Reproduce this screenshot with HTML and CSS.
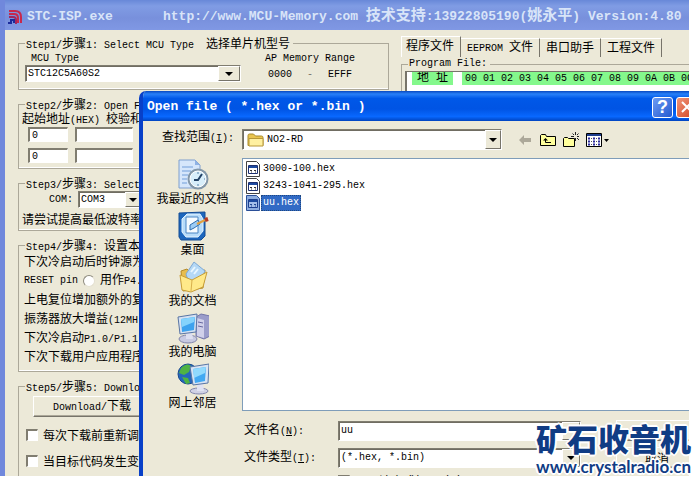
FILE: index.html
```html
<!DOCTYPE html>
<html lang="zh-CN">
<head>
    <meta charset="UTF-8">
    <title>STC-ISP.exe</title>
    <link rel="stylesheet" href="styles.css">
</head>
<body>
    <div class="desktop">
        <!-- Main window -->
        <main class="window">
            <header class="title-bar">
                <svg class="app-icon" width="16" height="16" viewBox="0 0 16 16" fill="none">
                    <path d="M2 2h6q6 0 6 6v6M2 5h5q4 0 4 4v5" stroke="#c8284c" stroke-width="2"/>
                    <path d="M2 8h4q3 0 3 3v4" stroke="#a02860" stroke-width="2"/>
                    <path d="M1 14h3v-3h3v3" stroke="#1c2c9c" stroke-width="2"/>
                </svg>
                <span class="app-name">STC-ISP.exe</span>
                <span class="app-info">http://www.MCU-Memory.com <span class="zh">技术支持</span>:13922805190(<span class="zh">姚永平</span>) Version:4.80</span>
            </header>

            <div class="window-body">
                <div class="steps">
                    <fieldset class="group">
                        <legend><span class="en">Step1/</span>步骤<span class="en">1: Select MCU Type&nbsp; </span>选择单片机型号</legend>
                        <div class="mcu-row">
                            <div class="mcu-type">
                                <label class="en mcu-label" for="mcu">MCU Type</label>
                                <div class="combo">
                                    <select id="mcu"><option>STC12C5A60S2</option></select>
                                    <span class="combo-arrow"></span>
                                </div>
                            </div>
                            <div class="memory-range en">
                                <span>AP Memory Range</span>
                                <span class="range-values"><span>0000</span><span class="dash">-</span><span>EFFF</span></span>
                            </div>
                        </div>
                    </fieldset>

                    <fieldset class="group">
                        <legend><span class="en">Step2/</span>步骤<span class="en">2: Open F</span></legend>
                        <div class="line tight">起始地址<span class="en">(HEX) </span>校验和</div>
                        <div class="address-row">
                            <input class="box short" type="text" value="0" aria-label="起始地址 1">
                            <input class="box" type="text" aria-label="校验和 1">
                            <input class="box" type="text" aria-label="文件 1">
                        </div>
                        <div class="address-row">
                            <input class="box short" type="text" value="0" aria-label="起始地址 2">
                            <input class="box" type="text" aria-label="校验和 2">
                            <input class="box" type="text" aria-label="文件 2">
                        </div>
                    </fieldset>

                    <fieldset class="group">
                        <legend><span class="en">Step3/</span>步骤<span class="en">3: Select</span></legend>
                        <div class="com-row">
                            <label class="en" for="com">COM:</label>
                            <div class="combo com-combo">
                                <select id="com"><option>COM3</option></select>
                                <span class="combo-arrow"></span>
                            </div>
                        </div>
                        <div class="line tight">请尝试提高最低波特率</div>
                    </fieldset>

                    <fieldset class="group options">
                        <legend><span class="en">Step4/</span>步骤<span class="en">4: </span>设置本</legend>
                        <div class="line">下次冷启动后时钟源为</div>
                        <div class="line reset-row">
                            <span class="en">RESET pin</span>
                            <input class="radio" type="radio" name="reset" id="reset-io">
                            <label for="reset-io">用作<span class="en">P4.</span></label>
                        </div>
                        <div class="line">上电复位增加额外的复</div>
                        <div class="line">振荡器放大增益<span class="en">(12MH</span></div>
                        <div class="line">下次冷启动<span class="en">P1.0/P1.1</span></div>
                        <div class="line">下次下载用户应用程序</div>
                    </fieldset>

                    <fieldset class="group download">
                        <legend><span class="en">Step5/</span>步骤<span class="en">5: Downlo</span></legend>
                        <button class="raised download-button" type="button"><span class="en">Download/</span>下载</button>
                        <label class="check-label"><input class="check" type="checkbox">每次下载前重新调</label>
                        <label class="check-label"><input class="check" type="checkbox">当目标代码发生变</label>
                    </fieldset>
                </div>

                <div class="files">
                    <div class="tabs">
                        <button class="tab active" type="button">程序文件</button>
                        <button class="tab" type="button"><span class="en">EEPROM </span>文件</button>
                        <button class="tab" type="button">串口助手</button>
                        <button class="tab" type="button">工程文件</button>
                    </div>
                    <fieldset class="group program">
                        <legend class="en">Program File:</legend>
                        <div class="hex-view">
                            <table class="hex-table">
                                <thead>
                                    <tr>
                                        <th class="address">地 址</th>
                                        <td class="spacer"></td>
                                        <th>00</th><th>01</th><th>02</th><th>03</th><th>04</th><th>05</th>
                                        <th>06</th><th>07</th><th>08</th><th>09</th><th>0A</th><th>0B</th>
                                        <th>0C</th>
                                    </tr>
                                </thead>
                            </table>
                        </div>
                    </fieldset>
                </div>
            </div>
        </main>

        <!-- Open file dialog -->
        <section class="dialog">
            <header class="dialog-title">
                <span class="dialog-name">Open file ( *.hex or *.bin )</span>
                <button class="caption-button" type="button">?</button>
                <button class="caption-button close" type="button" aria-label="关闭">
                    <svg width="14" height="14" viewBox="0 0 14 14"><path d="M2 2l10 10M12 2L2 12" stroke="#fff" stroke-width="2"/></svg>
                </button>
            </header>

            <div class="dialog-body">
                <div class="look-in">
                    <label for="folder">查找范围<span class="en">(<u>I</u>):</span></label>
                    <div class="combo folder-combo">
                        <svg width="18" height="16" viewBox="0 0 18 16">
                            <path d="M1 3.500q0-1.500 1.500-1.500h4l2 2h6q1.500 0 1.500 1.500v8H1z" fill="#e9c44f" stroke="#a98a2c"/>
                            <path d="M2 6.500h14v7.500H2z" fill="#fff0a0" stroke="#b89838"/>
                        </svg>
                        <select id="folder"><option>NO2-RD</option></select>
                        <span class="combo-arrow"></span>
                    </div>
                    <div class="toolbar">
                        <button class="tool" type="button" aria-label="后退">
                            <svg width="16" height="16" viewBox="0 0 16 16"><path d="M2 8l5-5v3h7v4H7v3z" fill="#aca899"/></svg>
                        </button>
                        <button class="tool" type="button" aria-label="向上">
                            <svg width="16" height="16" viewBox="0 0 16 16">
                                <path d="M.5 13.500v-10l1-1h4l1 2h9v9z" fill="#ffff9c" stroke="#000"/>
                                <path d="M5.500 7v3.500H11" fill="none" stroke="#000"/>
                                <path d="M3 8.500L5.500 6 8 8.500z" fill="#000"/>
                            </svg>
                        </button>
                        <button class="tool" type="button" aria-label="新建文件夹">
                            <svg width="16" height="16" viewBox="0 0 16 16">
                                <path d="M.5 14.500v-8l1-1h3l1 1h6v8z" fill="#ffff9c" stroke="#000"/>
                                <path d="M12.500 0v3M12.500 6v3M8 4.500h3M14 4.500h2M9.500 1.500l1.500 1.500M15.500 1.500L14 3M14 6l2 2" stroke="#222"/>
                            </svg>
                        </button>
                        <button class="tool" type="button" aria-label="查看">
                            <svg width="24" height="16" viewBox="0 0 24 16">
                                <path d="M.5 1.500h15v13H.5z" fill="#fff" stroke="#000"/>
                                <path d="M1 2h14v2H1z" fill="#1c3c8c"/>
                                <path d="M2 6.500h2M7 6.500h2M12 6.500h2M2 9.500h2M7 9.500h2M12 9.500h2M2 12.500h2M7 12.500h2M12 12.500h2" stroke="#2a2a9a" stroke-width="2"/>
                                <path d="M5 6.500h1M10 6.500h1M5 9.500h1M10 9.500h1M5 12.500h1M10 12.500h1" stroke="#555"/>
                                <path d="M18 7h5l-2.500 3z" fill="#000"/>
                            </svg>
                        </button>
                    </div>
                </div>

                <div class="browser">
                    <nav class="places">
                        <a class="place" href="#">
                            <svg width="32" height="32" viewBox="0 0 32 32">
                                <path d="M2 1h16l5 5v23H2z" fill="#d5e6fb" stroke="#7f9fcf"/>
                                <path d="M18 1v5h5z" fill="#8fb2e4"/>
                                <path d="M5 8h11M5 12h9M5 16h6M5 20h5M5 24h5" stroke="#a3c2ea" stroke-width="2"/>
                                <circle cx="21" cy="20" r="10.500" fill="#8397a8"/>
                                <circle cx="21" cy="20" r="8" fill="#d8eefa" stroke="#fff"/>
                                <path d="M25 15l-4 6h-4" fill="none" stroke="#244468" stroke-width="2"/>
                                <path d="M21 13v2M21 25v2M27 20h1" stroke="#5680a8"/>
                            </svg>
                            <span>我最近的文档</span>
                        </a>
                        <a class="place" href="#">
                            <svg width="32" height="32" viewBox="0 0 32 32">
                                <path d="M2 3l26-1v24l-4 4H4l-2-3z" fill="#1c66bd" stroke="#154d94"/>
                                <path d="M5 9l5-5h13l3 5v12l-5 6H9l-4-5z" fill="#b7dcfa" stroke="#e5f5ff"/>
                                <path d="M9 7h12v16H9z" fill="#f5fbff" stroke="#4b86c4"/>
                                <path d="M13 20v-5l8-5 2 4-6 4z" fill="#9cccf4" stroke="#2c6db0"/>
                                <path d="M20 14l8-4" stroke="#e0a040" stroke-width="2"/>
                                <path d="M28 10l3-1" stroke="#b83a22" stroke-width="4"/>
                            </svg>
                            <span>桌面</span>
                        </a>
                        <a class="place" href="#">
                            <svg width="32" height="32" viewBox="0 0 32 32">
                                <path d="M4 10l6-2 4 4 14-3-2 18-20 3z" fill="#e7bd4d" stroke="#b48a28"/>
                                <path d="M9 13l8-12 11 9-7 14-9-2z" fill="#b4d8f6" stroke="#7ea9d4"/>
                                <path d="M14 11l4-5M17 13l4-5" stroke="#e8f6ff" stroke-width="2"/>
                                <path d="M3 14l12 5 15-8-4 15-12 5-9-2z" fill="#ffe989" stroke="#c79d38"/>
                                <path d="M15 19l-1 11" stroke="#d8b04c"/>
                            </svg>
                            <span>我的文档</span>
                        </a>
                        <a class="place" href="#">
                            <svg width="32" height="32" viewBox="0 0 32 32">
                                <path d="M19 5l5-3 9 2v20l-6 3-8-3z" fill="#9a9cca" stroke="#7376a8"/>
                                <path d="M20 6l7 2v18l-7-2z" fill="#d0d0ea"/>
                                <path d="M21 10l5 1M21 14l5 1" stroke="#6668a0"/>
                                <ellipse cx="11" cy="27" rx="9" ry="4" fill="#c8cae2" stroke="#8084aa"/>
                                <path d="M9 19h6l1 8H9z" fill="#dddff0"/>
                                <path d="M1 5l19-3-1 18-16 2z" fill="#d5e1f2" stroke="#5975a4"/>
                                <path d="M4 7l14-2-1 13-12 2z" fill="#3da2ee"/>
                                <path d="M4 7l14-2-1 5-12 5z" fill="#85d3fc"/>
                            </svg>
                            <span>我的电脑</span>
                        </a>
                        <a class="place" href="#">
                            <svg width="32" height="32" viewBox="0 0 32 32">
                                <circle cx="11" cy="11" r="10" fill="#2467bd" stroke="#17488c"/>
                                <path d="M4 5q6-6 10-2l-2 6-5 3-5-2zM5 14l6 1 2 5-4 1zM14 10h6v7h-5z" fill="#4fb344"/>
                                <ellipse cx="22" cy="28" rx="9" ry="3" fill="#d0d1e5" stroke="#8488ae"/>
                                <path d="M20 20h6l1 8h-7z" fill="#e0e2f2"/>
                                <path d="M13 4l19-3-1 19-15 2z" fill="#d7e3f3" stroke="#5975a4"/>
                                <path d="M16 6l13-2-1 14-10 2z" fill="#43a9f2"/>
                                <path d="M16 6l13-2-1 6-11 5z" fill="#91dafd"/>
                            </svg>
                            <span>网上邻居</span>
                        </a>
                    </nav>

                    <div class="content">
                        <ul class="file-list">
                            <li class="file">
                                <svg width="14" height="16" viewBox="0 0 14 16"><path d="M.5.5h10l3 3v12H.5z" fill="#fff" stroke="#444"/><path d="M2.500 4.500h9v8h-9z" fill="#fff" stroke="#1c2f70"/><path d="M3 6h8" stroke="#1c4aa0" stroke-width="2"/><path d="M4 9.500h2M8 9.500h2M5 11h1M9 11h1" stroke="#333"/></svg>
                                <span class="file-name">3000-100.hex</span>
                            </li>
                            <li class="file">
                                <svg width="14" height="16" viewBox="0 0 14 16"><path d="M.5.5h10l3 3v12H.5z" fill="#fff" stroke="#444"/><path d="M2.500 4.500h9v8h-9z" fill="#fff" stroke="#1c2f70"/><path d="M3 6h8" stroke="#1c4aa0" stroke-width="2"/><path d="M4 9.500h2M8 9.500h2M5 11h1M9 11h1" stroke="#333"/></svg>
                                <span class="file-name">3243-1041-295.hex</span>
                            </li>
                            <li class="file selected">
                                <svg width="14" height="16" viewBox="0 0 14 16"><path d="M.5.5h10l3 3v12H.5z" fill="#8eaee0" stroke="#2a4f98"/><path d="M2.500 4.500h9v8h-9z" fill="#a4bfea" stroke="#1c3f90"/><path d="M3 6h8" stroke="#1c4aa0" stroke-width="2"/><path d="M4 9.500h2M8 9.500h2M5 11h1M9 11h1" stroke="#234a94"/></svg>
                                <span class="file-name">uu.hex</span>
                            </li>
                        </ul>

                        <div class="form">
                            <label for="name">文件名<span class="en">(<u>N</u>):</span></label>
                            <div class="combo">
                                <input id="name" type="text" value="uu">
                                <span class="combo-arrow"></span>
                            </div>
                            <button class="raised" type="button" aria-label="打开"></button>

                            <label for="type">文件类型<span class="en">(<u>T</u>):</span></label>
                            <div class="combo">
                                <select id="type"><option>(*.hex, *.bin)</option></select>
                                <span class="combo-arrow"></span>
                            </div>
                            <button class="raised" type="button">取消</button>

                            <label class="read-only"><input class="check" type="checkbox">以只读方式打开<span class="en">(<u>R</u>)</span></label>
                        </div>
                    </div>
                </div>
            </div>
        </section>
    </div>

    <div class="site-mark">
        <span class="site-name">矿石收音机</span>
        <span class="site-url">www.crystalradio.cn</span>
    </div>
</body>
</html>
```

FILE: styles.css
```css
* {
    box-sizing: border-box;
}

body {
    margin: 0;
    background-color: #fff;
    color: #000;
    font-family: "Noto Sans CJK SC", sans-serif;
    font-size: 12px;
    line-height: 14px;
    white-space: nowrap;
    overflow: hidden;
}

button, input, select {
    font: inherit;
    color: inherit;
}

.en, select, input, .file-name {
    font-family: "Liberation Mono", "Noto Sans CJK SC", monospace;
    font-size: 10px;
    white-space: pre;
}

.desktop {
    position: relative;
    height: calc(100vh - 3px);
    margin-right: 10px;
    overflow: hidden;
    background-color: #ece9d8;
}

/* Main window */
.window {
    border-left: 5px solid #7088dc;
}

.title-bar {
    display: flex;
    align-items: center;
    height: 30px;
    padding: 4px 2px 0;
    background: linear-gradient(#6888d8, #809ce4 20%, #7890dc 60%, #8098e4);
    color: #d8e4f8;
    font-family: "Liberation Mono", "Noto Sans CJK SC", monospace;
    font-size: 13px;
    font-weight: bold;
}

.app-name {
    flex: none;
    width: 136px;
    margin-left: 4px;
}

.zh {
    font-size: 15px;
}

.window-body {
    display: flex;
    gap: 12px;
    padding: 6px 0 0 13px;
}

.steps {
    flex: none;
    display: flex;
    flex-direction: column;
    gap: 7px;
    width: 371px;
}

.group {
    min-width: 0;
    margin: 0;
    padding: 0 3px 5px;
    border: 1px solid #aca899;
    box-shadow: inset 0 -1px #fff;
}

.group legend {
    margin-left: 3px;
    padding: 0 3px 0 1px;
    height: 14px;
    line-height: 14px;
}

.mcu-row {
    display: flex;
    gap: 24px;
    padding: 2px 3px 2px;
}

.mcu-type {
    width: 216px;
}

.mcu-label {
    display: block;
    padding-left: 6px;
    line-height: 13px;
}

.combo {
    display: flex;
    align-items: center;
    height: 17px;
    background-color: #fff;
    border: 1px solid #807d70;
    border-right-color: #fff;
    border-bottom-color: #fff;
    box-shadow: inset 1px 1px #706d62;
}

.combo select, .combo input {
    flex: 1;
    min-width: 0;
    padding: 0 2px;
    border: none;
    background: none;
    appearance: none;
    outline: none;
}

.combo-arrow {
    display: flex;
    align-items: center;
    justify-content: center;
    width: 22px;
    height: 100%;
    background-color: #ece9d8;
    border: 1px solid #fff;
    border-right-color: #77746a;
    border-bottom-color: #77746a;
}

.combo-arrow::after {
    content: "";
    border: 4px solid transparent;
    border-top-color: #000;
    border-bottom: none;
}

.memory-range {
    display: flex;
    flex-direction: column;
    gap: 2px;
}

.range-values {
    display: flex;
    padding-left: 3px;
}

.dash {
    width: 36px;
    text-align: center;
    color: #77746a;
}

.address-row {
    display: flex;
    gap: 7px;
    padding: 0 6px;
}

.address-row + .address-row {
    margin-top: 6px;
}

.box {
    width: 58px;
    height: 15px;
    padding: 0 2px;
    background-color: #fff;
    border: 2px solid #807d70;
    border-right: 1px solid #fff;
    border-bottom: 1px solid #fff;
}

.box.short {
    width: 40px;
}

.raised {
    padding: 0 8px;
    background-color: #ece9d8;
    border: 1px solid #fff;
    border-right-color: #77746a;
    border-bottom-color: #77746a;
    box-shadow: inset -1px -1px #aca899;
}

.com-row {
    display: flex;
    align-items: center;
    gap: 5px;
    padding: 1px 0 0 27px;
}

.com-combo {
    width: 64px;
}

.com-combo .combo-arrow {
    width: 16px;
}

.line {
    height: 19px;
    line-height: 18px;
    padding-left: 2px;
}

.line.tight {
    padding-left: 0;
    height: 16px;
    line-height: 14px;
}

.com-row + .line.tight {
    margin-top: 1px;
    padding-top: 3px;
}

.reset-row {
    display: flex;
    align-items: center;
    gap: 5px;
}

.radio {
    width: 12px;
    height: 12px;
    margin: 0;
    appearance: none;
    border-radius: 50%;
    background-color: #fff;
    border: 1px solid #8c897c;
    border-right-color: #e4e0d0;
    border-bottom-color: #e4e0d0;
}

.download {
    display: flex;
    flex-direction: column;
    align-items: flex-start;
    padding-top: 3px;
}

.download-button {
    width: 118px;
    height: 21px;
    margin-left: 11px;
    font-size: 12px;
}

.check-label {
    display: flex;
    align-items: center;
    gap: 5px;
    height: 26px;
    padding-left: 4px;
}

.download-button + .check-label {
    margin-top: 5px;
}

.check {
    width: 12px;
    height: 12px;
    margin: 0;
    appearance: none;
    background-color: #fff;
    border: 2px solid #807d70;
    border-right: 1px solid #fff;
    border-bottom: 1px solid #fff;
}

.files {
    flex: 1;
    min-width: 0;
}

.tabs {
    display: flex;
    align-items: flex-end;
    height: 21px;
}

.tab {
    height: 19px;
    padding: 0 6px 3px;
    background: none;
    border: none;
    border-top: 1px solid #fff;
    border-right: 1px solid #77746a;
}

.tab.active {
    height: 21px;
    padding: 0 6px 4px 4px;
    border-left: 1px solid #fff;
}

.program {
    height: 60px;
    margin-right: -4px;
}

.hex-view {
    height: 40px;
    overflow: hidden;
    background-color: #fff;
    border-left: 2px solid #77746a;
    border-top: 1px solid #77746a;
}

.hex-table {
    margin-left: 5px;
    border-collapse: collapse;
    font-family: "Liberation Mono", "Noto Sans CJK SC", monospace;
    font-size: 10px;
    line-height: 13px;
}

.hex-table th {
    min-width: 18px;
    height: 13px;
    padding: 0;
    background-color: #84f88c;
    font-weight: normal;
}

.hex-table .address {
    min-width: 41px;
    font-size: 12px;
}

.hex-table .spacer {
    min-width: 9px;
    padding: 0 0 0 9px;
}

/* Open file dialog */
.dialog {
    position: absolute;
    top: 91px;
    left: 139px;
    right: -9px;
    background-color: #ece9d8;
    border-left: 4px solid #0840c8;
    border-radius: 7px 0 0 0;
    overflow: hidden;
}

.dialog-title {
    display: flex;
    align-items: center;
    gap: 3px;
    height: 30px;
    padding: 2px 1px 0 4px;
    background: linear-gradient(#0848c0, #2880f8 10%, #0058e8 25%, #0054e4 60%, #0868ff 85%, #0044c0);
    color: #fff;
    font-family: "Liberation Mono", monospace;
    font-size: 13px;
    font-weight: bold;
}

.dialog-name {
    flex: 1;
}

.caption-button {
    display: flex;
    align-items: center;
    justify-content: center;
    width: 21px;
    height: 21px;
    padding: 0;
    border: 1px solid #fff;
    border-radius: 3px;
    background: linear-gradient(135deg, #6c9cf4, #2458d0);
    color: #fff;
    font-family: "Liberation Sans", sans-serif;
    font-size: 18px;
}

.caption-button.close {
    background: linear-gradient(135deg, #f09478, #d04420);
}

.look-in {
    display: flex;
    align-items: center;
    height: 37px;
    padding-left: 19px;
}

.look-in > label {
    width: 80px;
    padding-bottom: 4px;
}

.folder-combo {
    width: 260px;
    height: 21px;
    padding-left: 4px;
}

.folder-combo .combo-arrow {
    width: 16px;
}

.toolbar {
    display: flex;
    gap: 7px;
    padding-left: 15px;
}

.tool {
    display: flex;
    padding: 0;
    border: none;
    background: none;
}

.browser {
    display: flex;
}

.places {
    flex: none;
    display: flex;
    flex-direction: column;
    gap: 3px;
    width: 99px;
    padding-top: 1px;
}

.place {
    display: flex;
    flex-direction: column;
    align-items: center;
    height: 48px;
    color: #000;
    text-decoration: none;
}

.content {
    flex: 1;
    min-width: 0;
}

.file-list {
    height: 253px;
    margin: 0;
    padding: 1px 3px;
    list-style: none;
    background-color: #fff;
    border: 1px solid #7f9db9;
}

.file {
    display: flex;
    align-items: center;
    gap: 1px;
    height: 17px;
}

.file-name {
    padding: 1px 2px;
}

.selected .file-name {
    background-color: #316ac5;
    color: #fff;
    outline: 1px dotted #204880;
    outline-offset: -1px;
}

.form {
    display: grid;
    grid-template-columns: 94px 1fr 82px;
    gap: 6px 0;
    align-items: center;
    padding: 9px 0 0 2px;
}

.form .combo {
    height: 20px;
    margin-right: 35px;
}

.form .combo-arrow {
    width: 18px;
}

.form .raised {
    height: 21px;
}

.read-only {
    grid-column: 2;
    display: flex;
    align-items: center;
    gap: 5px;
}

/* Site mark over the lower right corner */
.site-mark {
    position: absolute;
    right: 8px;
    bottom: 2px;
    display: flex;
    flex-direction: column;
    align-items: center;
    color: #103c84;
    font-weight: bold;
    text-shadow: -2px 0 #fff, 2px 0 #fff, 0 -2px #fff, 0 2px #fff, -1px -1px #fff, 1px -1px #fff, -1px 1px #fff, 1px 1px #fff;
}

.site-name {
    font-size: 31px;
    font-weight: 900;
    line-height: 38px;
}

.site-url {
    font-family: Lato, sans-serif;
    font-size: 17px;
    line-height: 20px;
}
```
